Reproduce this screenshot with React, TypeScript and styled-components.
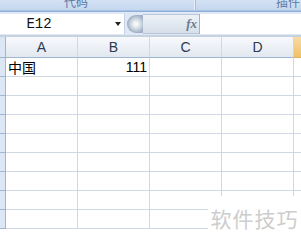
import React from 'react'
import styled, { createGlobalStyle } from 'styled-components'

const Global = createGlobalStyle`
  html, body { margin: 0; padding: 0; background: #fff; }
  body { font-family: "Liberation Sans", "Noto Sans CJK SC", sans-serif; }
`

const cols = ['A', 'B', 'C', 'D', 'E']
const rows: string[][] = [
  ['中国', '111', '', '', ''],
  ['', '', '', '', ''],
  ['', '', '', '', ''],
  ['', '', '', '', ''],
  ['', '', '', '', ''],
  ['', '', '', '', ''],
  ['', '', '', '', ''],
  ['', '', '', '', ''],
  ['', '', '', '', ''],
]

const App = () => {
  return (
    <Page>
      <Global />
      <Ribbon>
        <Group w={196} pad={64}><GroupLabel>代码</GroupLabel></Group>
        <Group w={140} pad={80}><GroupLabel>插件</GroupLabel></Group>
      </Ribbon>
      <FormulaBar>
        <NameBox>
          <NameText>E12</NameText>
          <Arrow />
        </NameBox>
        <Grip />
        <FxZone><Fx>fx</Fx></FxZone>
        <Input />
      </FormulaBar>
      <Sheet>
        <Corner />
        {cols.map(c => (
          <ColHead key={c} selected={c === 'E'}>{c}</ColHead>
        ))}
        {rows.map((r, i) => (
          <React.Fragment key={i}>
            <RowHead />
            {r.map((v, j) => (
              <Cell key={j} num={j === 1}>{v}</Cell>
            ))}
          </React.Fragment>
        ))}
      </Sheet>
      <Watermark>软件技巧</Watermark>
    </Page>
  )
}

const Page = styled.div`
  position: relative;
  width: 301px;
  height: 240px;
  overflow: hidden;
  background: #fff;
`
const Ribbon = styled.div`
  display: flex;
  height: 10px;
  overflow: hidden;
  background: linear-gradient(#d3e1f3, #c6d8ef);
  border-bottom: 1px solid #a9c3e4;
`
const Group = styled.div<{ w: number; pad: number }>`
  width: ${p => p.w}px;
  flex: none;
  display: flex;
  align-items: flex-end;
  padding-left: ${p => p.pad}px;
  box-sizing: border-box;
  border-right: 1px solid #a4bedd;
  box-shadow: inset -1px 0 0 #e8f0fa;
`
const GroupLabel = styled.div`
  flex: none;
  height: 14px;
  line-height: 14px;
  font-size: 12px;
  color: #5a78a6;
`
const FormulaBar = styled.div`
  display: flex;
  align-items: center;
  height: 23px;
  background: #dfe8f4;
  border-top: 1px solid #8fb0dc;
  border-bottom: 1px solid #c7d2df;
`
const NameBox = styled.div`
  width: 125px;
  height: 20px;
  flex: none;
  display: flex;
  align-items: center;
  background: #fff;
  box-sizing: border-box;
  border-right: 1px solid #c5d3e6;
`
const NameText = styled.div`
  width: 78px;
  text-align: center;
  font-family: "Liberation Mono", "DejaVu Sans Mono", monospace;
  font-size: 14px;
  color: #111;
`
const Arrow = styled.div`
  width: 0;
  height: 0;
  border-left: 3px solid transparent;
  border-right: 3px solid transparent;
  border-top: 4px solid #222;
  margin-left: 37px;
`
const Grip = styled.div`
  width: 16px;
  height: 18px;
  flex: none;
  margin-left: 2px;
  border-radius: 9px 0 0 9px;
  background: radial-gradient(circle at 8px 8px, #ffffff 0, #e6ebf1 3px, #b9c4d2 7px, #9fb0c6 9px);
  border: 1px solid #9db1cc;
  border-right: 0;
  box-sizing: border-box;
`
const FxZone = styled.div`
  width: 56px;
  height: 20px;
  flex: none;
  display: flex;
  align-items: center;
  justify-content: flex-end;
  padding-right: 2px;
  box-sizing: border-box;
  background: linear-gradient(#eef2f7, #d6dfea);
  border-top: 1px solid #b8c6d8;
  border-bottom: 1px solid #b8c6d8;
`
const Fx = styled.span`
  font-family: "Liberation Serif", serif;
  font-style: italic;
  font-weight: bold;
  font-size: 13px;
  color: #6b7a90;
`
const Input = styled.div`
  flex: 1;
  height: 20px;
  background: #fff;
  border-left: 1px solid #9eb3cf;
  box-sizing: border-box;
`
const Sheet = styled.div`
  display: grid;
  grid-template-columns: 6px 72px 72px 72px 72px 72px;
  grid-template-rows: 21px;
  grid-auto-rows: 19px;
  border-top: 1px solid #c5d2e0;
`
const Corner = styled.div`
  background: #dce6f4;
  border-right: 1px solid #9eb6ce;
  border-bottom: 1px solid #9eb6ce;
`
const ColHead = styled.div<{ selected?: boolean }>`
  display: flex;
  align-items: center;
  justify-content: center;
  font-size: 14px;
  color: #2a3a50;
  background: ${p => (p.selected ? 'linear-gradient(#f9dba6, #f1c166)' : 'linear-gradient(#f7f9fc, #e2e8f0)')};
  border-right: 1px solid ${p => (p.selected ? '#e6b35b' : '#d0d7e2')};
  border-bottom: 1px solid ${p => (p.selected ? '#e6b35b' : '#9eb6ce')};
`
const RowHead = styled.div`
  background: #dce6f4;
  border-right: 1px solid #9eb6ce;
  border-bottom: 1px solid #9eb6ce;
`
const Cell = styled.div<{ num?: boolean }>`
  display: flex;
  align-items: center;
  justify-content: ${p => (p.num ? 'flex-end' : 'flex-start')};
  padding: 0 2px;
  font-family: "Liberation Sans", "Noto Sans CJK SC", sans-serif;
  font-size: 14px;
  color: #000;
  border-right: 1px solid #d0d7e5;
  border-bottom: 1px solid #d0d7e5;
`
const Watermark = styled.div`
  position: absolute;
  left: 208px;
  top: 196px;
  width: 93px;
  height: 44px;
  background: #fff;
  display: flex;
  align-items: center;
  justify-content: center;
  font-family: "Noto Sans CJK SC", sans-serif;
  font-size: 21px;
  color: #cdcdcd;
  letter-spacing: 1px;
`

export default App
